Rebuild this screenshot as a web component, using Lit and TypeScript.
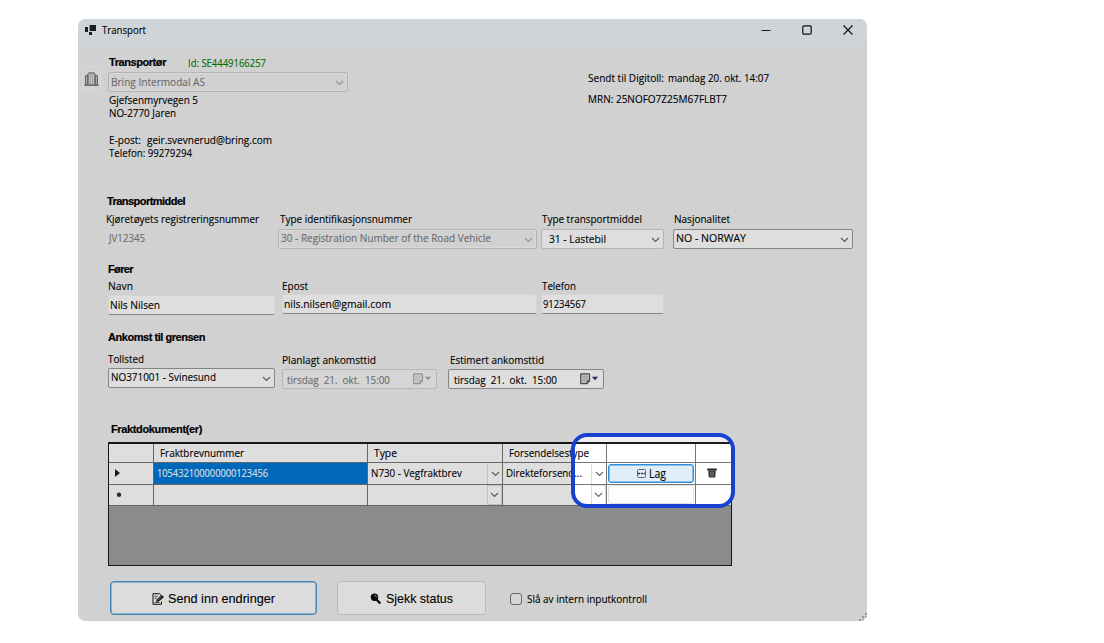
import { LitElement, html, css } from "lit";
import { customElement, property } from "lit/decorators.js";

/* A run of text fitted to a given width: condensed by default, tracked when "track" is set. */
@customElement("fit-text")
class FitText extends LitElement {
  @property({ type: Number }) w = 0;
  @property() text = "";
  @property({ type: Boolean }) track = false;
  static styles = css`
    :host { display: block; white-space: pre; flex: none; }
    span { display: inline-block; white-space: pre; transform-origin: 0 50%; vertical-align: top; }
  `;
  firstUpdated() {
    const s = this.renderRoot.querySelector("span") as HTMLElement;
    const natural = s.getBoundingClientRect().width;
    this.style.width = this.w + "px";
    if (this.track) s.style.letterSpacing = (this.w - natural) / this.text.length + "px";
    else s.style.transform = `scaleX(${this.w / natural})`;
  }
  render() {
    return html`<span>${this.text}</span>`;
  }
}

const t = (text: string, w: number, cls = "") =>
  html`<fit-text class=${cls} .text=${text} .w=${w} .track=${cls === "b"}></fit-text>`;

const chevron = html`<svg class="chev" width="9" height="6" viewBox="0 0 9 6">
  <path d="M1 1l3.5 3.5L8 1" fill="none" stroke="currentColor" stroke-width="1.1" />
</svg>`;

const calendar = html`<svg class="cal" width="19" height="12" viewBox="0 0 19 12">
  <path d="M1.5 .8h7.2q.8 0 .8.8v6.2l-2.6 2.9H1.5q-.8 0-.8-.8V1.6q0-.8.8-.8z" fill="var(--sheet)" stroke="var(--edge)" stroke-width="1.2" />
  <path d="M2.5 3.4h5.2M2.5 5.4h5.2M2.5 7.4h4" stroke="var(--edge)" stroke-width=".25" />
  <path d="M9.5 7.8H7v2.9" fill="none" stroke="var(--edge)" stroke-width=".9" />
  <path d="M11.8 3.8h6.4l-3.2 3.4z" fill="var(--arrow)" />
</svg>`;

@customElement("app-root")
class AppRoot extends LitElement {
  static styles = css`
    :host { display: block; width: 1104px; height: 643px; background: #fff; overflow: hidden;
      font: 11px/13px "Open Sans", "Noto Sans", sans-serif; color: #000; }
    * { box-sizing: border-box; }
    fit-text { -webkit-text-stroke: .12px currentColor; }
    svg { display: block; flex: none; }
    .window { position: relative; margin: 19px 0 0 78px; width: 789px; height: 602px;
      background: #f0f0f0; border-radius: 7px; overflow: hidden; }
    .titlebar { height: 25px; background: #eef4f8; display: flex; align-items: center; padding: 0 14px 4px 7px; }
    .titlebar fit-text { margin: 0 auto 0 6px; }
    .controls { display: flex; align-items: center; gap: 31px; }
    .row { display: flex; align-items: flex-start; }
    .carrier { height: 149px; padding: 11px 0 0 4px; }
    .company { width: 19px; height: 26px; margin-top: 11px; border: 1px solid #f8f8f8; border-radius: 3px;
      background: #f3f3f3; display: flex; align-items: center; justify-content: center; }
    .who { width: 480px; padding-left: 7px; }
    .who .head { height: 17px; gap: 22px; padding: 1px 0 0 1px; }
    .lines { padding: 1px 0 0 1px; }
    .lines div { height: 13.3px; display: flex; gap: 6px; }
    .sent { padding: 16px 0 0 7px; }
    .sent div { height: 21px; display: flex; gap: 4px; }
    .b { font: bold 11px/13px "Liberation Sans", Arial, sans-serif; -webkit-text-stroke: .2px #000; }
    .green { color: #008000; }
    .section { padding-left: 28px; }
    .vehicle { height: 69px; padding-top: 2px; }
    .driver { height: 68px; padding-left: 30px; padding-top: 1px; }
    .arrival { height: 92px; padding-left: 30px; padding-top: 1px; }
    .vehicle .b { padding-left: 1px; }
    .field { display: flex; flex-direction: column; }
    .vehicle .row { margin-top: 4px; }
    .vehicle .label { height: 17px; }
    .driver .row { margin-top: 3px; }
    .arrival .row { margin-top: 8px; }
    .label { height: 16px; padding-left: 1px; display: flex; }
    .label.flush { padding-left: 0; }
    .label.nudge { padding-left: 2px; }
    .driver .label { height: 15px; }
    .driver .label.tall { height: 16px; }
    .low { padding-top: 1px; }
    .box { height: 20px; display: flex; align-items: center; padding: 0 0 2px 2px; background: #fff;
      border: 1px solid #d8d8d8; border-radius: 2px; }
    .vehicle .box, .arrival .box { padding-bottom: 3px; }
    .input { padding-left: 1px; border-color: #f5f5f5; border-bottom-color: #9a9a9a; }
    .off { color: #7c7c7c; background: #f0f0f0; border-color: #f6f6f6; }
    .select { justify-content: space-between; padding-right: 3px; color: #000; border-color: #cfcfcf; }
    .select .chev { color: #666; margin-top: 4px; }
    .select.strong { border-color: #999; }
    .select.off { color: #7c7c7c; background: #f0f0f0; border-color: #cfcfcf; box-shadow: inset 0 0 0 1px #fafafa; }
    .select.off .chev { color: #aaa; }
    .arrival .date { justify-content: space-between; padding: 0 4px 0 5px; border-color: #999;
      --sheet: #d8d8dc; --edge: #54545a; --arrow: #26356c; }
    .arrival .date.off { padding-left: 4px; border-color: #d2d2d2; background: #f5f5f5; --sheet: #e6e6e6;
      --edge: #a8a8a8; --arrow: #aaa; }
    .w123 { width: 123px; } .w155 { width: 155px; } .w156 { width: 156px; } .w167 { width: 167px; }
    .w180 { width: 180px; } .w240 { width: 240px; } .w254 { width: 255px; } .w259 { width: 259px; }
    .g4 { margin-left: 4px; } .g5 { margin-left: 5px; } .g7 { margin-left: 7px; }
    .g9 { margin-left: 9px; } .g11 { margin-left: 11px; }
    .vehicle .inset { padding: 0 3px 1px 7px; }
    .inset .chev { margin-top: 2px; }
    .docs { height: 162px; padding-left: 30px; margin-top: 1px; }
    .docs > .b { height: 19px; padding-left: 3px; }
    .grid { width: 624px; height: 124px; background: #a0a0a0; border: 2px solid #1c1c1c; border-right-width: 1px;
      border-left-width: 1px; border-bottom-width: 1px; }
    .tr { display: grid; grid-template-columns: 45px 214px 135px 104px 89px 35px; height: 21px; background: #fff; }
    .tr.first { height: 19px; }
    .tr.new { height: 22px; }
    .tr > div { border-right: 1px solid #767676; border-bottom: 1px solid #767676; display: flex; align-items: center;
      padding: 0 0 1px 6px; min-width: 0; }
    .tr > div:last-child { border-right: 0; }
    .tr .selected { background: #0078d7; color: #fff; padding: 0 0 2px 3px; }
    .tr .combo { padding: 0 0 0 3px; justify-content: space-between; }
    .tr .combo fit-text { margin-bottom: 2px; }
    .drop { margin-left: auto; width: 15px; height: 20px; border-left: 1px solid #ddd; color: #666; display: flex;
      align-items: center; justify-content: center; }
    .new .drop { height: 20px; border: 1px solid #ddd; }
    .tr .cell { padding: 1px; }
    .make { height: 19px; width: 86px; border: 1px solid #2f8fdc; box-shadow: inset 0 0 0 .5px #2f8fdc; border-radius: 3px;
      background: #e0eef9; display: flex; align-items: center; justify-content: center; gap: 3px; font-size: 12px;
      padding-bottom: 1px; }
    .make.empty { border-color: #e2e2e2; background: #fdfdfd; box-shadow: none; }
    .tr .trash { padding-left: 11px; }
    .actions { padding-left: 32px; display: flex; align-items: center; height: 35px; margin-top: -5px; }
    .button { height: 34px; padding-top: 2px; border-radius: 4px; background: #fdfdfd; border: 1px solid #d4d4d4;
      display: flex; align-items: center; justify-content: center; gap: 4px;
      font: 13px/16px "Liberation Sans", Arial, sans-serif; }
    .button.main { width: 207px; border: 1px solid #4c9ad2; box-shadow: inset 0 0 0 .5px #4c9ad2; }
    .button.check { width: 149px; margin-left: 20px; }
    .tick { width: 12px; height: 12px; border: 1px solid #777; border-radius: 3px; background: #f6f6f6; margin: 2px 5px 0 24px; }
    .actions > fit-text { margin-top: 2px; }
    .grip { position: absolute; right: 0; bottom: 0; }
    .spotlight { position: absolute; left: 493px; top: 414px; width: 164px; height: 75px; border: 4px solid #1741cf;
      border-radius: 16px; box-shadow: 0 0 0 1000px rgba(0, 0, 0, .13); }
  `;

  render() {
    const drop = html`<div class="drop">${chevron}</div>`;
    return html`
      <div class="window">
        <div class="titlebar">
          <svg width="11" height="10" viewBox="0 0 11 10"><path d="M0 2h3v5H0zM4 7h3v3H4zM4.6 0H11v6H4.6z" fill="#222" /></svg>
          ${t("Transport", 44)}
          <div class="controls">
            <svg width="10" height="10" viewBox="0 0 10 10"><path d="M.5 5.5h9" stroke="#222" /></svg>
            <svg width="10" height="10" viewBox="0 0 10 10"><rect x=".8" y=".8" width="8.4" height="8.4" rx="1.2" fill="none" stroke="#111" stroke-width="1.2" /></svg>
            <svg width="10" height="10" viewBox="0 0 10 10"><path d="M.5.5l9 9M9.5.5l-9 9" stroke="#111" stroke-width="1.1" /></svg>
          </div>
        </div>

        <div class="row carrier">
          <div class="company">
            <svg width="15" height="14" viewBox="0 0 15 14">
              <path d="M3.8 1.8L5 .8h5l1.2 1v11.4H3.8zM11.2 3.6h2.3v9.6h-2.3zM1.4 3.6h2.4v9.6H1.4z" fill="#bbb" stroke="#777" stroke-width="1" />
              <path d="M5.6 2.8v9M7.5 2.8v9M9.4 2.8v9" stroke="#f0f0f0" stroke-width=".9" stroke-dasharray="1.5 .8" />
              <path d="M0 13.3h15" stroke="#777" />
            </svg>
          </div>
          <div class="who">
            <div class="row head">${t("Transportør", 57, "b")}${t("Id: SE4449166257", 78, "green")}</div>
            <div class="box select off w240">${t("Bring Intermodal AS", 94)}${chevron}</div>
            <div class="lines">
              <div>${t("Gjefsenmyrvegen 5", 89)}</div>
              <div>${t("NO-2770 Jaren", 67)}</div>
              <div></div>
              <div>${t("E-post:", 32)}${t("geir.svevnerud@bring.com", 125)}</div>
              <div>${t("Telefon: 99279294", 83)}</div>
            </div>
          </div>
          <div class="sent">
            <div>${t("Sendt til Digitoll:", 76)}${t("mandag 20. okt. 14:07", 101)}</div>
            <div>${t("MRN: 25NOFO7Z25M67FLBT7", 139)}</div>
          </div>
        </div>

        <div class="section vehicle">
          ${t("Transportmiddel", 78, "b")}
          <div class="row">
            <div class="field w167"><div class="label flush">${t("Kjøretøyets registreringsnummer", 153)}</div>
              <div class="box off">${t("JV12345", 36)}</div></div>
            <div class="field w259 g5"><div class="label nudge">${t("Type identifikasjonsnummer", 132)}</div>
              <div class="box select off">${t("30 - Registration Number of the Road Vehicle", 210)}${chevron}</div></div>
            <div class="field w123 g4"><div class="label">${t("Type transportmiddel", 100)}</div>
              <div class="box select inset">${t("31 - Lastebil", 57)}${chevron}</div></div>
            <div class="field w180 g9"><div class="label">${t("Nasjonalitet", 56)}</div>
              <div class="box select strong">${t("NO - NORWAY", 70)}${chevron}</div></div>
          </div>
        </div>

        <div class="section driver">
          ${t("Fører", 25, "b")}
          <div class="row">
            <div class="field w167"><div class="label flush tall">${t("Navn", 25)}</div>
              <div class="box input">${t("Nils Nilsen", 50)}</div></div>
            <div class="field w254 g7"><div class="label flush">${t("Epost", 26)}</div>
              <div class="box input">${t("nils.nilsen@gmail.com", 107)}</div></div>
            <div class="field w123 g4"><div class="label">${t("Telefon", 34)}</div>
              <div class="box input">${t("91234567", 43)}</div></div>
          </div>
        </div>

        <div class="section arrival">
          ${t("Ankomst til grensen", 97, "b")}
          <div class="row">
            <div class="field w167"><div class="label flush">${t("Tollsted", 36)}</div>
              <div class="box select strong">${t("NO371001 - Svinesund", 105)}${chevron}</div></div>
            <div class="field w155 g7 low"><div class="label flush">${t("Planlagt ankomsttid", 94)}</div>
              <div class="box date off">${t("tirsdag  21.  okt.  15:00", 103)}${calendar}</div></div>
            <div class="field w156 g11 low"><div class="label nudge">${t("Estimert ankomsttid", 94)}</div>
              <div class="box date">${t("tirsdag  21.  okt.  15:00", 103)}${calendar}</div></div>
          </div>
        </div>

        <div class="docs">
          ${t("Fraktdokument(er)", 91, "b")}
          <div class="grid">
            <div class="tr first">
              <div></div><div>${t("Fraktbrevnummer", 84)}</div><div>${t("Type", 23)}</div>
              <div>${t("Forsendelsestype", 80)}</div><div></div><div></div>
            </div>
            <div class="tr">
              <div><svg width="5" height="8" viewBox="0 0 5 8"><path d="M0 0l5 4-5 4z" fill="#222" /></svg></div>
              <div class="selected">${t("105432100000000123456", 111)}</div>
              <div class="combo">${t("N730 - Vegfraktbrev", 91)}${drop}</div>
              <div class="combo">${t("Direkteforsend...", 76)}${drop}</div>
              <div class="cell"><div class="make">
                <svg width="9" height="9" viewBox="0 0 9 9"><rect x=".5" y=".5" width="8" height="8" rx="1" fill="none" stroke="#666" /><path d="M1 4.5h7" stroke="#333" stroke-width="1.4" stroke-dasharray="2 .8" /></svg>
                ${t("Lag", 17)}</div></div>
              <div class="trash"><svg width="10" height="10" viewBox="0 0 10 10"><path d="M.3 .5h9.4v2H.3z" fill="#222" /><path d="M1.2 2.5h7.6L8.2 9.6H1.8z" fill="#333" /><path d="M3.5 3.6l.3 5M5 3.6v5M6.5 3.6l-.3 5" stroke="#999" stroke-width=".6" /></svg></div>
            </div>
            <div class="tr new">
              <div><svg width="8" height="6" viewBox="0 0 8 6"><circle cx="4" cy="3.8" r="2.2" fill="#333" /></svg></div>
              <div></div><div class="combo">${drop}</div><div class="combo">${drop}</div>
              <div class="cell"><div class="make empty"></div></div><div></div>
            </div>
          </div>
        </div>

        <div class="actions">
          <div class="button main">
            <svg width="12" height="12" viewBox="0 0 12 12">
              <path d="M7.5 .7H1v10.6h8.5V8.5M7.5 .7l2 2" fill="none" stroke="#111" stroke-width="1" />
              <path d="M2.6 3.2h3M2.6 5.2h2M2.6 9.4h5" stroke="#222" stroke-width=".8" />
              <path d="M4 8.8l.7-2.3L9 2.3l2.4.6.2 1.6-5 4z" fill="#111" /><path d="M5.6 7.2L9.3 4" stroke="#ddd" stroke-width=".7" />
            </svg>
            ${t("Send inn endringer", 107)}
          </div>
          <div class="button check">
            <svg width="12" height="12" viewBox="0 0 12 12"><circle cx="4.5" cy="4.3" r="3.7" fill="#0a0a0a" /><path d="M6.5 6.5l3.8 4" stroke="#0a0a0a" stroke-width="2.4" /><path d="M4.5 2.2q2 .2 2 2" fill="none" stroke="#bbb" stroke-width=".9" /></svg>
            ${t("Sjekk status", 67)}
          </div>
          <div class="tick"></div>
          ${t("Slå av intern inputkontroll", 120)}
        </div>

        <svg class="grip" width="8" height="8" viewBox="0 0 8 8"><path d="M6 0h2v2H6zM3 3h2v2H3zM6 3h2v2H6zM0 6h2v2H0zM3 6h2v2H3z" fill="#aaa" /></svg>
        <div class="spotlight"></div>
      </div>
    `;
  }
}
